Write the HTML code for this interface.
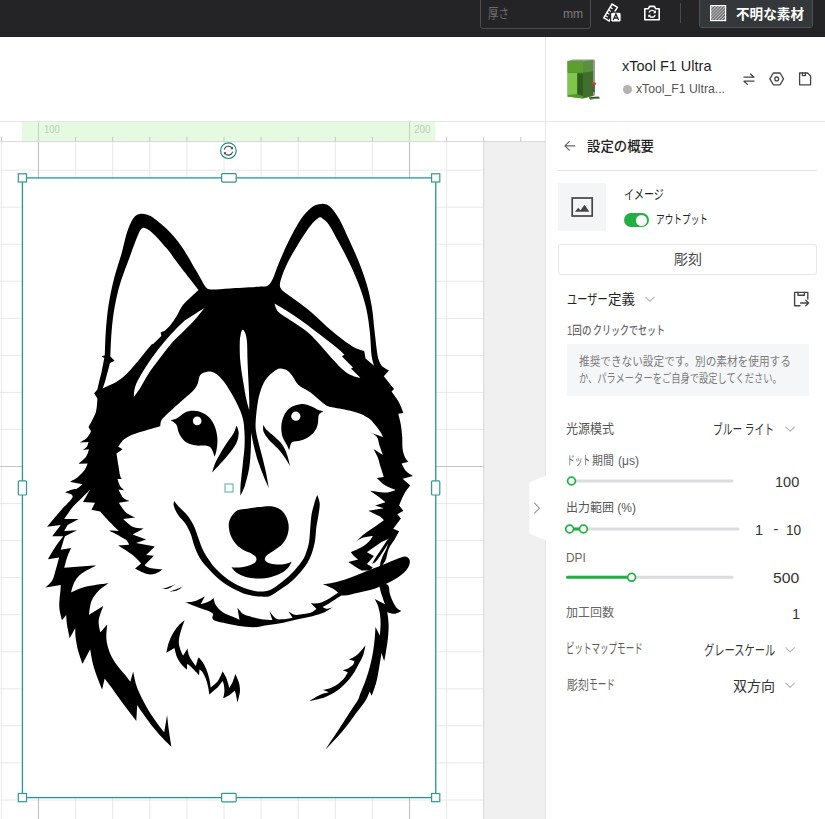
<!DOCTYPE html>
<html lang="ja"><head><meta charset="utf-8"><title>xTool</title>
<style>
html,body{margin:0;padding:0;}
body{width:825px;height:819px;overflow:hidden;position:relative;background:#fff;font-family:"Liberation Sans", "Noto Sans CJK JP", sans-serif;}
.t{position:absolute;white-space:nowrap;line-height:20px;height:20px;transform-origin:0 50%;}
.abs{position:absolute;}
</style></head><body>
<!-- canvas grid -->
<svg class="abs" style="left:0;top:0" width="825" height="819" viewBox="0 0 825 819">
  <rect x="0" y="0" width="825" height="819" fill="#ffffff"/>
  <g stroke="#e8e8e8" stroke-width="1" fill="none">
    <path d="M446.6 141V819M372.4 141V819M335.3 141V819M298.2 141V819M261.1 141V819M224.0 141V819M186.9 141V819M149.8 141V819M112.7 141V819M75.6 141V819M1.4 141V819"/>
    <path d="M0 170.1H483.5M0 207.2H483.5M0 244.2H483.5M0 281.2H483.5M0 318.3H483.5M0 355.4H483.5M0 392.4H483.5M0 429.4H483.5M0 503.6H483.5M0 540.6H483.5M0 577.6H483.5M0 614.7H483.5M0 651.8H483.5M0 688.8H483.5M0 725.8H483.5M0 762.9H483.5M0 800.0H483.5"/>
  </g>
  <g stroke="#c2c2c2" stroke-width="1.1" fill="none">
    <path d="M38.5 141V819M409.5 141V819M0 466.5H483.5"/>
  </g>
  <rect x="484" y="141.5" width="62" height="678" fill="#f0f0f0"/>
  <path d="M483.7 141V819" stroke="#d4d4d4" stroke-width="1"/>
  <rect x="0" y="122" width="545" height="19.5" fill="#ffffff"/>
  <rect x="22" y="122" width="413.4" height="19.5" fill="#e6f9e1"/>
  <path d="M0 121.5H825" stroke="#e6e6e6"/>
  <path d="M0 141.6H545" stroke="#d6d9d6"/>
  <g stroke="#c6c6c6" stroke-width="1" fill="none">
    <path d="M520.8 137V141.5M483.7 137V141.5M446.6 137V141.5M372.4 137V141.5M335.3 137V141.5M298.2 137V141.5M261.1 137V141.5M224.0 137V141.5M186.9 137V141.5M149.8 137V141.5M112.7 137V141.5M75.6 137V141.5M1.4 137V141.5"/>
    <path d="M38.5 122V141.5M409.5 122V141.5" stroke="#c2d4c0"/>
  </g>
</svg>
<!-- top bar -->
<div class="abs" style="left:0;top:0;width:825px;height:37px;background:#242427;"></div>
<div class="abs" style="left:480px;top:-5px;width:111px;height:34px;border:1px solid #4b4b50;border-radius:3px;box-sizing:border-box;"></div>
<div class="abs" style="left:680px;top:3px;width:1px;height:20px;background:#4a4a4e;"></div>
<div class="abs" style="left:699px;top:-6px;width:114px;height:34px;background:#35383a;border:1px solid #4c4f52;border-radius:3px;box-sizing:border-box;"></div>
<!-- panel -->
<div class="abs" style="left:545px;top:37px;width:280px;height:782px;background:#ffffff;border-left:1px solid #e4e4e4;box-sizing:border-box;"></div>
<div class="abs" style="left:545px;top:121px;width:280px;height:1px;background:#e6e6e6;"></div>
<div class="abs" style="left:558px;top:170px;width:259px;height:1px;background:#e3e3e3;"></div>
<div class="abs" style="left:558px;top:183px;width:48px;height:48px;background:#f4f5f7;"></div>
<div class="abs" style="left:624px;top:213px;width:25px;height:14px;border-radius:7px;background:#1fb141;"></div>
<div class="abs" style="left:636px;top:214.5px;width:11px;height:11px;border-radius:50%;background:#fff;"></div>
<div class="abs" style="left:558px;top:244px;width:259px;height:31px;border:1px solid #e6e6e6;border-radius:3px;box-sizing:border-box;background:#fff;"></div>
<div class="abs" style="left:567px;top:344px;width:242px;height:52px;background:#f5f6f8;"></div>
<div class="abs" style="left:622.5px;top:84.5px;width:9px;height:9px;border-radius:50%;background:#b3b3b3;"></div>

<svg class="abs" style="left:0;top:0" width="825" height="819" viewBox="0 0 825 819">
<rect x="23" y="178.5" width="412" height="619" fill="#ffffff"/>
<g fill="#000">
<path d="M162.5 569.5C162.5 569.5 157.5 573.1 154.8 573.8C152.1 574.5 149.5 574.7 146.2 573.8C142.9 572.9 135.1 568.6 135.1 568.6L141.1 563.5C141.1 563.5 136.4 557.9 132.6 555.0C128.8 552.0 118.0 545.6 118.0 545.6L129.1 544.7C129.1 544.7 127.7 541.0 125.7 539.6C122.3 537.2 108.6 530.2 108.6 530.2L118.9 531.0C118.9 531.0 113.4 525.8 110.3 522.5C107.2 519.2 100.1 511.4 100.1 511.4L91.5 509.7L95.0 502.8L83.0 502.0L89.8 490.0C89.8 490.0 79.1 492.7 75.0 493.0C71.2 493.3 65.4 492.0 65.4 492.0C65.4 492.0 72.8 490.7 75.6 489.4C78.4 488.1 82.5 484.3 82.5 484.3L69.7 481.7C69.7 481.7 75.0 479.2 77.4 477.4C79.8 475.5 82.5 472.9 84.2 470.6C85.9 468.3 87.6 463.4 87.6 463.4L78.2 463.8C78.2 463.8 84.1 459.3 85.9 456.9C87.7 454.5 89.0 449.2 89.0 449.2L82.5 450.1C82.5 450.1 85.8 448.1 86.8 446.7C87.8 445.3 88.5 441.9 88.5 441.9L79.9 442.4C79.9 442.4 85.0 440.0 86.8 438.1C88.6 436.2 91.0 431.3 91.0 431.3L88.5 427.0C88.5 427.0 91.4 422.0 92.7 419.3C94.0 416.6 95.4 414.3 96.2 410.8C97.0 407.3 97.4 398.5 97.4 398.5L94.2 393.3L97.4 389.5C97.4 389.5 98.6 384.1 99.3 381.0C100.0 377.9 101.0 374.8 101.8 371.0C102.6 367.2 104.3 358.0 104.3 358.0L101.6 356.4L104.9 355.2C104.9 355.2 105.2 340.0 105.8 331.6C106.4 323.2 107.2 313.8 108.6 304.8C110.0 295.9 112.0 286.4 114.2 277.9C116.4 269.3 119.5 260.8 121.6 253.5C123.6 246.2 124.9 239.3 126.5 234.0C128.0 228.9 129.7 224.8 131.3 221.7C132.7 219.0 134.4 216.9 136.0 215.6C137.6 214.3 139.3 213.9 141.1 213.7C142.8 213.5 144.7 213.9 146.5 214.4C148.3 214.9 150.1 215.5 152.1 216.9C155.5 219.3 161.9 224.2 166.8 229.1C171.7 234.0 176.5 239.3 181.4 246.2C186.3 253.1 192.0 263.8 196.1 270.6C200.0 277.2 203.4 284.1 205.8 287.2C207.1 288.9 208.6 289.3 210.7 289.4C214.7 289.6 222.3 288.8 230.0 288.4C238.6 287.9 255.7 287.1 262.0 286.6C264.4 286.4 266.1 286.9 267.9 285.6C269.7 284.4 271.3 282.0 272.7 279.1C274.5 275.4 276.2 269.5 278.8 263.3C281.5 257.0 284.9 248.6 288.6 241.3C292.3 234.0 297.1 224.8 300.8 219.3C304.1 214.4 308.1 210.7 310.6 208.3C312.4 206.6 314.2 205.7 316.0 205.0C317.8 204.3 319.9 204.0 321.6 203.9C323.4 203.8 324.8 203.9 326.5 204.6C328.2 205.3 329.9 206.4 331.6 208.3C333.8 210.8 336.8 214.6 339.4 219.3C342.2 224.4 345.4 231.9 348.6 238.8C351.8 245.7 355.3 253.1 358.4 260.8C361.5 268.5 364.8 277.5 367.0 285.2C369.2 292.9 370.6 299.5 371.9 307.2C373.2 314.9 373.6 323.5 374.6 331.6C375.6 339.7 376.6 350.4 377.7 356.0C378.5 360.0 379.6 363.1 381.5 365.5C383.4 367.9 388.9 370.4 388.9 370.4L383.8 376.2L394.0 389.1L391.5 391.6C391.5 391.6 397.1 399.1 399.1 402.7C401.1 406.3 403.4 413.0 403.4 413.0L398.3 413.8C398.3 413.8 400.2 421.1 400.9 425.0C401.5 428.9 401.9 432.9 402.2 436.9C402.5 440.9 402.1 445.5 402.6 448.9C403.1 452.3 404.1 455.3 405.1 457.4C406.0 459.4 408.5 461.7 408.5 461.7L401.7 463.4C401.7 463.4 404.1 469.0 406.0 471.1C407.9 473.2 412.8 475.9 412.8 475.9L402.6 478.8L410.3 485.6C410.3 485.6 406.2 490.4 404.3 493.7C402.4 497.0 399.1 505.6 399.1 505.6L403.4 510.8L397.4 514.2L400.9 518.5L393.2 528.7L399.1 531.3C399.1 531.3 396.6 536.1 394.9 539.0C393.2 541.9 390.5 544.9 388.9 548.4C387.3 551.9 387.0 557.0 385.5 560.3C384.0 563.6 380.0 568.0 380.0 568.0L368.4 570.6L361.8 570.5C361.8 570.5 356.8 567.6 354.5 566.2C352.2 564.8 348.3 562.1 348.3 562.1L358.2 559.6C358.2 559.6 355.7 557.8 354.5 556.6C353.3 555.4 350.9 552.2 350.9 552.2C350.9 552.2 358.8 548.9 361.8 547.1C364.9 545.3 367.4 543.1 369.2 541.2C371.0 539.4 372.8 536.0 372.8 536.0C372.8 536.0 366.1 536.7 363.3 537.6C360.5 538.5 356.0 541.6 356.0 541.6C356.0 541.6 360.9 536.7 363.3 534.7C365.7 532.7 368.2 531.2 370.6 529.5C373.1 527.8 375.8 525.9 378.0 524.4C380.2 522.9 383.8 520.2 383.8 520.2C383.8 520.2 382.0 517.8 380.3 516.8C377.7 515.2 368.4 510.8 368.4 510.8L383.8 508.2L375.2 505.6L385.5 502.2C385.5 502.2 381.2 498.7 378.6 496.8C376.0 494.9 370.1 490.8 370.1 490.8C370.1 490.8 381.2 492.6 385.5 492.5C389.7 492.4 395.7 489.9 395.7 489.9C395.7 489.9 388.6 487.6 385.5 485.6C382.4 483.6 376.9 477.9 376.9 477.9L383.8 477.1C383.8 477.1 381.3 469.3 380.3 466.0C379.3 462.7 378.9 460.2 377.8 457.4C376.7 454.5 373.5 448.9 373.5 448.9L382.9 454.9C382.9 454.9 380.5 448.5 379.5 445.5C378.5 442.5 378.5 439.0 376.9 436.9C375.3 434.8 370.1 432.6 370.1 432.6L382.9 436.9C382.9 436.9 381.5 433.7 380.3 431.8C379.0 429.8 377.2 427.3 375.2 425.0C373.2 422.7 371.2 420.1 368.4 418.1C365.5 416.1 362.1 414.4 358.1 413.0C354.1 411.6 348.9 410.6 344.4 409.6C339.8 408.6 333.9 407.7 330.8 407.0C328.8 406.5 327.7 406.4 326.0 405.3C324.2 404.2 322.4 402.5 320.0 400.5C317.4 398.4 314.1 395.1 310.5 392.5C306.9 389.9 301.4 387.7 298.5 385.0C295.6 382.3 294.6 378.9 292.8 376.5C291.0 374.1 289.6 372.1 287.5 370.8C285.4 369.5 282.4 368.4 280.0 368.6C277.6 368.8 275.5 370.2 273.0 372.2C270.5 374.1 267.3 377.0 265.2 380.3C263.1 383.6 261.4 388.2 260.1 392.2C258.8 396.2 258.2 399.6 257.5 404.2C256.8 408.8 256.1 415.3 255.8 419.6C255.5 423.7 255.4 426.1 255.8 429.8C256.2 433.5 257.3 437.5 258.3 441.8C259.3 446.1 260.6 450.4 261.9 455.5C263.2 460.6 264.9 467.2 266.0 472.6C267.1 478.0 268.8 487.9 268.8 487.9C268.8 487.9 265.2 480.3 263.5 476.0C261.8 471.7 260.0 467.2 258.4 462.3C256.8 457.4 255.3 451.9 254.1 446.9C252.9 441.9 251.2 432.4 251.2 432.4C251.2 432.4 251.1 445.9 250.7 452.0C250.3 458.1 250.0 463.4 249.0 469.1C248.0 474.8 246.1 481.8 244.7 486.2C243.4 490.1 240.4 495.6 240.4 495.6C240.4 495.6 240.2 490.0 240.5 486.2C240.9 481.2 241.9 472.0 242.6 465.7C243.2 459.4 244.1 453.7 244.4 448.6C244.7 443.5 244.8 439.6 244.6 435.0C244.4 430.4 244.2 425.6 243.4 421.3C242.6 417.0 241.4 413.6 239.6 409.3C237.8 405.0 235.3 400.2 232.7 395.6C230.1 391.1 227.0 385.7 224.2 382.0C221.3 378.3 218.4 375.1 215.6 373.4C212.8 371.7 209.6 371.4 207.1 371.7C204.6 372.0 201.9 373.1 200.3 375.1C198.7 377.1 198.8 381.1 197.7 383.7C196.5 386.3 195.5 388.1 193.4 390.5C191.3 392.9 187.8 395.5 185.0 398.0C182.2 400.5 179.9 402.5 176.5 405.6C173.1 408.7 167.1 414.2 164.5 416.8C163.0 418.3 161.8 419.4 161.1 421.0C160.4 422.6 160.3 426.2 160.3 426.2C160.3 426.2 150.4 429.0 145.7 430.4C141.0 431.8 135.8 433.1 132.1 434.7C128.4 436.3 125.8 437.8 123.5 439.8C121.2 441.8 118.4 446.7 118.4 446.7L122.6 449.2L116.5 453.5C116.5 453.5 117.8 461.8 118.4 465.5C119.0 469.2 119.5 473.4 120.1 475.7C120.5 477.2 121.8 479.1 121.8 479.1L117.5 479.1C117.5 479.1 118.9 484.1 120.1 486.0C121.2 487.9 124.4 490.3 124.4 490.3L118.4 489.4C118.4 489.4 121.6 496.1 123.5 498.0C125.4 499.9 130.0 501.1 130.0 501.1L118.9 502.8C118.9 502.8 123.0 509.8 125.7 512.2C128.4 514.6 135.1 517.4 135.1 517.4L123.2 519.1C123.2 519.1 129.2 525.2 132.6 526.8C136.0 528.4 143.7 528.5 143.7 528.5L132.6 534.4L146.2 539.6L136.0 543.0L154.8 546.4L146.2 555.0L153.9 555.8L144.5 565.2C144.5 565.2 147.6 567.4 150.0 568.0C153.0 568.7 162.5 569.5 162.5 569.5Z"/>
<path d="M89.8 490.0C89.8 490.0 84.1 495.6 81.3 498.5C78.5 501.4 75.5 503.7 72.7 507.1C69.9 510.5 64.2 519.1 64.2 519.1L78.7 519.1L67.6 525.0L64.2 531.0L77.0 530.2L65.0 536.2C65.0 536.2 63.9 539.2 63.3 541.3C62.6 543.6 60.8 549.8 60.8 549.8L71.0 548.1C71.0 548.1 67.9 555.1 66.8 558.4C65.7 561.7 64.2 567.8 64.2 567.8L96.7 565.2C96.7 565.2 85.0 570.9 81.3 573.8C77.8 576.5 76.1 579.2 74.4 582.3C72.7 585.4 71.0 592.6 71.0 592.6C71.0 592.6 80.1 588.2 86.4 586.6C92.7 585.0 108.6 583.2 108.6 583.2C108.6 583.2 101.2 587.9 98.4 590.9C95.6 593.9 93.1 597.1 91.5 601.1C89.9 605.1 89.0 614.8 89.0 614.8L103.3 605.9C103.3 605.9 99.2 615.9 98.7 620.3C98.2 624.7 100.4 632.2 100.4 632.2L107.3 624.5C107.3 624.5 106.0 634.4 106.4 639.1C106.8 643.8 108.1 648.4 109.8 652.7C111.5 657.0 114.1 661.0 116.7 664.7C119.3 668.4 122.9 672.1 125.2 675.0C127.3 677.7 130.3 681.8 130.3 681.8L133.2 671.5C133.2 671.5 134.8 680.6 136.3 685.2C137.8 689.8 139.9 694.0 142.3 698.9C144.7 703.8 148.1 709.8 150.9 714.3C153.8 718.8 157.2 723.2 159.4 726.2C161.2 728.7 164.2 732.2 164.2 732.2L167.1 715.1C167.1 715.1 168.1 724.4 168.8 729.7C169.5 735.0 171.4 746.8 171.4 746.8C171.4 746.8 164.5 740.2 161.1 736.5C157.7 732.8 154.0 728.5 150.9 724.5C147.8 720.5 144.6 715.9 142.3 712.6C140.2 709.6 137.2 704.9 137.2 704.9L136.3 720.8C136.3 720.8 131.6 714.8 128.6 710.9C125.6 707.0 121.5 701.5 118.4 697.2C115.3 692.9 112.1 688.3 109.8 685.2C107.8 682.5 104.7 678.4 104.7 678.4L102.1 689.5C102.1 689.5 98.6 681.1 97.0 676.7C95.4 672.3 93.8 667.6 92.7 663.0C91.6 658.4 90.2 649.3 90.2 649.3L82.5 663.8C82.5 663.8 79.4 655.4 78.2 651.0C77.0 646.6 76.1 641.2 75.6 637.4C75.1 633.7 75.3 628.0 75.3 628.0L69.7 638.2C69.7 638.2 67.7 629.2 67.1 625.4C66.5 621.5 66.2 615.1 66.2 615.1L62.0 620.3C62.0 620.3 59.5 612.1 59.3 607.1C59.0 602.1 60.2 593.7 60.5 590.0C60.6 588.0 60.8 584.9 60.8 584.9L45.4 587.4C45.4 587.4 50.5 583.5 52.2 580.6C53.9 577.8 54.5 574.1 55.6 570.3C56.8 566.4 59.1 557.5 59.1 557.5L47.9 559.2C47.9 559.2 53.0 550.2 55.6 546.4C58.2 542.6 63.3 536.2 63.3 536.2L52.2 536.2L60.8 525.0L47.1 526.8C47.1 526.8 56.5 515.5 60.8 510.5C65.1 505.5 72.0 499.8 72.7 496.8C73.4 493.8 65.0 492.6 65.0 492.6C65.0 492.6 70.9 489.4 75.0 489.0C79.1 488.6 89.8 490.0 89.8 490.0Z"/>
</g><g fill="#fff">
<path d="M142.8 227.9C140.4 228.5 139.1 232.7 137.4 236.4C135.3 241.1 132.9 248.2 130.1 255.9C127.3 263.6 123.0 274.2 120.4 282.8C117.8 291.4 116.1 299.1 114.6 307.2C113.1 315.3 112.3 323.4 111.6 331.6C110.9 339.8 110.4 356.5 110.4 356.5L114.6 360.8L110.0 363.0C110.0 363.0 106.7 375.8 105.5 380.0C104.5 383.4 102.7 388.4 102.7 388.4C102.7 388.4 107.1 386.4 109.4 385.3C111.7 384.2 114.2 383.2 116.7 381.7C119.2 380.2 121.6 378.3 124.1 376.2C126.5 374.1 129.0 371.4 131.4 368.8C133.8 366.2 136.3 363.2 138.7 360.3C141.1 357.4 143.9 353.8 146.0 351.1C148.1 348.5 151.5 344.4 151.5 344.4L153.4 343.8L161.3 335.9L160.7 332.2L164.4 331.0C164.4 331.0 168.5 327.3 170.5 324.9C172.5 322.5 174.4 319.8 176.4 316.6C178.4 313.4 180.1 308.9 182.5 305.6C184.9 302.4 188.3 299.7 191.0 297.1C193.7 294.5 198.5 290.1 198.5 290.1C198.5 290.1 186.7 275.0 181.4 268.1C176.1 261.2 171.7 254.5 166.8 248.6C161.9 242.7 156.1 236.1 152.1 232.7C148.9 230.0 145.2 227.3 142.8 227.9Z"/>
<path d="M319.1 217.6C317.1 218.8 313.5 221.8 310.6 225.4C307.2 229.8 302.5 237.0 298.4 243.7C294.3 250.4 289.2 259.2 286.2 265.7C283.1 272.2 280.9 278.8 280.1 282.8C279.6 285.5 279.8 287.3 281.5 289.5C283.4 291.9 287.3 294.1 291.2 297.1C296.1 300.8 303.8 305.9 310.7 311.7C317.6 317.4 325.7 325.8 332.6 331.6C339.5 337.4 346.8 343.0 352.1 346.3C356.6 349.1 364.3 351.2 364.3 351.2L365.5 358.5L374.1 365.8C374.1 365.8 372.1 360.0 371.6 356.0C370.9 350.3 370.7 339.3 369.8 331.6C368.9 323.9 368.1 317.0 366.5 309.7C364.9 302.4 362.8 295.4 360.0 287.7C357.2 280.0 353.2 271.0 349.6 263.3C346.0 255.6 341.7 247.8 338.2 241.3C334.7 234.8 331.1 228.0 328.5 224.2C326.6 221.4 324.1 219.5 322.5 218.4C321.4 217.6 320.3 216.9 319.1 217.6Z"/>
<path d="M204.5 308.1C204.5 308.1 194.6 314.2 191.0 316.6C187.6 318.8 185.7 319.7 182.7 322.4C179.3 325.4 174.6 330.2 170.5 334.7C166.4 339.2 162.4 344.0 158.3 349.3C154.2 354.6 149.6 361.1 146.1 366.4C142.6 371.7 139.4 377.2 137.5 381.1C135.9 384.3 135.1 387.0 134.5 389.6C133.9 392.2 133.8 396.9 133.8 396.9C133.8 396.9 137.7 391.9 139.9 388.4C142.3 384.5 145.4 378.4 148.5 373.7C151.6 369.0 154.6 365.2 158.3 360.3C162.0 355.4 166.1 349.5 170.5 344.4C174.9 339.3 180.8 334.1 185.0 329.8C189.2 325.5 192.7 322.1 195.9 318.5C199.2 314.9 204.5 308.1 204.5 308.1Z"/>
<path d="M274.5 303.4C274.5 303.4 281.7 307.5 286.3 310.5C291.1 313.6 297.2 317.5 303.3 321.9C309.4 326.3 317.1 332.4 322.8 336.8C328.5 341.2 333.8 345.2 337.4 348.2C340.3 350.6 344.4 354.6 344.4 354.6L342.0 356.4L353.0 367.4L351.0 368.6L360.3 377.8C360.3 377.8 356.5 377.5 354.2 376.5C351.5 375.4 347.9 373.8 344.4 371.0C340.7 368.1 336.3 363.2 332.2 358.8C328.1 354.4 324.0 349.2 320.0 344.8C316.0 340.4 312.4 336.2 308.0 332.5C303.6 328.8 298.4 325.7 293.5 322.3C288.6 318.9 281.7 315.1 278.5 312.0C275.8 309.3 274.5 303.4 274.5 303.4Z"/>
<path d="M242.4 329.8C241.6 330.1 241.0 333.0 240.6 335.0C240.2 337.0 239.8 339.2 239.8 342.0C239.7 346.2 239.7 353.7 240.2 360.0C240.7 366.3 241.8 373.3 242.9 380.0C244.0 386.7 245.4 395.0 246.5 400.0C247.4 404.1 249.2 410.0 249.2 410.0C249.2 410.0 249.4 404.0 249.3 400.0C249.2 395.0 248.7 386.7 248.4 380.0C248.1 373.3 247.7 366.3 247.5 360.0C247.3 353.7 247.4 346.5 247.0 342.0C246.7 338.3 246.0 335.0 245.2 333.0C244.6 331.4 243.2 329.5 242.4 329.8Z"/>
<path d="M389.0 538.7C389.0 538.7 384.1 540.6 381.6 542.0C379.2 543.4 376.7 545.4 374.3 547.1C371.9 548.8 367.0 552.2 367.0 552.2L373.9 555.9L367.0 564.0L372.8 567.6L368.4 571.8L380.0 568.0C380.0 568.0 380.1 565.2 380.2 564.0C380.3 562.8 380.5 562.2 380.9 561.0C381.4 559.5 382.1 557.4 383.1 555.2C384.1 553.0 385.8 550.5 386.8 547.8C387.8 545.0 389.0 538.7 389.0 538.7Z"/>
</g><g fill="#000">
<path d="M389.0 538.7C389.0 538.7 387.3 540.0 386.4 541.2C385.1 543.0 383.0 546.5 381.2 549.3C379.4 552.1 376.9 555.7 375.4 558.1C374.0 560.3 372.3 563.8 372.3 563.8C372.3 563.8 374.2 563.2 375.2 562.3C376.3 561.2 377.7 559.4 379.2 557.3C380.8 555.1 383.0 551.8 384.6 549.3C386.2 546.8 388.1 544.0 388.8 542.2C389.3 540.9 389.0 538.7 389.0 538.7Z"/>
<path d="M170.5 420.2C170.5 420.2 174.3 419.7 176.5 418.5C178.9 417.2 182.8 413.8 185.0 412.5C186.8 411.5 187.9 411.0 190.0 410.9C192.6 410.8 197.2 410.9 200.3 411.9C203.4 412.9 206.4 414.6 208.8 417.0C211.2 419.4 213.4 422.8 214.8 426.4C216.2 430.0 217.1 434.4 217.4 438.4C217.7 442.4 217.0 447.2 216.5 450.3C216.1 453.0 214.6 456.8 214.6 456.8C214.6 456.8 212.6 449.9 211.0 448.0C209.4 446.1 207.3 446.0 205.0 445.6C202.7 445.2 199.5 445.9 197.0 445.6C194.5 445.3 192.1 444.8 190.0 444.0C187.9 443.2 186.3 442.7 184.5 441.0C182.7 439.3 180.6 436.6 179.2 433.8C177.8 431.1 177.8 426.8 176.3 424.5C174.9 422.2 170.5 420.2 170.5 420.2Z"/>
<path d="M281.3 426.4C281.5 422.8 282.5 418.6 284.0 415.5C285.5 412.4 287.4 409.7 290.3 407.8C293.2 405.9 298.2 404.4 301.6 404.1C305.1 403.9 308.4 405.4 311.0 406.3C313.6 407.2 315.0 408.5 317.1 409.4C319.2 410.2 323.6 411.4 323.6 411.4C323.6 411.4 319.9 412.6 318.9 414.7C317.9 416.8 318.5 421.2 317.8 424.0C317.1 426.8 316.2 429.2 314.5 431.5C312.8 433.8 310.1 436.1 307.8 437.6C305.5 439.1 303.1 439.9 300.5 440.6C297.9 441.3 294.1 441.5 292.5 442.0C291.6 442.3 291.3 442.9 290.9 443.8C290.3 445.2 289.2 450.3 289.2 450.3C289.2 450.3 288.0 447.2 287.0 445.2C285.9 443.0 283.6 440.1 282.6 437.0C281.7 433.9 281.1 430.0 281.3 426.4Z"/>
<path d="M236.5 425.6C236.5 425.6 238.8 430.2 238.7 433.2C238.6 436.2 238.0 439.8 236.2 443.5C234.3 447.2 231.4 450.9 227.6 455.5C223.6 460.4 212.2 472.6 212.2 472.6C212.2 472.6 213.8 466.2 215.6 462.3C217.6 458.0 221.2 451.8 224.2 446.9C227.2 442.0 231.5 436.8 233.6 433.2C235.2 430.4 236.5 425.6 236.5 425.6Z"/>
<path d="M263.3 424.8C263.3 424.8 262.7 429.4 263.6 431.8C264.5 434.2 266.3 436.6 268.6 439.4C271.0 442.2 275.1 445.6 277.8 448.6C280.5 451.6 282.8 454.6 284.8 457.6C286.9 460.6 290.1 466.4 290.1 466.4C290.1 466.4 288.3 458.1 287.0 454.5C285.7 450.9 284.2 447.6 282.1 444.6C280.0 441.6 277.0 439.1 274.4 436.6C271.8 434.1 268.4 431.8 266.5 429.8C264.9 428.1 263.3 424.8 263.3 424.8Z"/>
<path d="M235.6 511.4C233.0 513.5 230.0 518.1 229.1 521.7C228.2 525.3 229.0 529.5 229.9 532.9C230.8 536.3 232.6 539.6 234.7 542.4C236.8 545.2 239.8 547.6 242.6 549.5C245.4 551.4 249.1 552.2 251.3 553.5C253.5 554.8 255.4 556.0 256.1 557.5C256.8 559.0 256.5 560.9 255.3 562.2C254.1 563.5 251.7 564.5 249.0 565.4C246.3 566.3 242.3 567.2 239.4 567.5C236.5 567.8 231.5 567.3 231.5 567.3C231.5 567.3 234.0 570.9 236.3 572.5C238.7 574.1 242.1 576.0 245.8 577.0C249.5 578.0 254.3 578.6 258.5 578.6C262.7 578.6 267.2 578.0 271.2 577.0C275.2 576.0 279.4 574.2 282.3 572.5C285.2 570.8 287.2 568.8 288.7 567.0C290.2 565.2 291.5 561.7 291.5 561.7C291.5 561.7 286.8 563.9 283.9 564.3C281.0 564.7 277.2 564.6 274.4 564.3C271.6 563.9 268.8 563.1 267.2 562.2C265.8 561.4 264.8 560.2 264.8 559.0C264.8 557.8 265.8 556.3 267.2 555.1C268.8 553.6 271.9 552.1 274.4 550.3C276.9 548.4 280.2 546.4 282.3 544.0C284.4 541.6 286.0 538.9 287.1 536.0C288.2 533.1 288.8 529.7 288.7 526.5C288.6 523.3 287.6 519.8 286.3 517.0C285.0 514.2 283.2 511.6 280.7 509.8C278.2 508.0 274.9 506.8 271.2 506.3C267.5 505.9 262.9 506.7 258.5 507.1C254.1 507.6 248.4 508.3 244.6 509.0C240.9 509.7 238.2 509.3 235.6 511.4Z"/>
<path d="M174.1 501.0C174.1 501.0 173.2 504.1 173.8 506.1C174.5 508.4 176.2 512.0 178.2 514.9C180.1 517.8 183.4 520.5 185.5 523.7C187.6 526.9 189.2 530.3 190.7 534.0C192.2 537.7 192.8 541.8 194.3 545.7C195.8 549.6 197.3 553.7 199.5 557.4C201.7 561.1 204.2 564.0 207.5 567.7C210.8 571.4 215.2 576.0 219.3 579.4C223.5 582.8 227.8 585.7 232.4 588.2C237.0 590.7 242.2 593.2 247.1 594.6C252.0 596.0 257.9 596.4 261.7 596.6C265.0 596.8 266.9 597.2 270.0 596.0C273.2 594.8 277.3 591.5 280.7 589.3C284.1 587.1 287.0 585.3 290.1 582.6C293.2 579.9 296.6 576.6 299.5 573.2C302.4 569.9 305.5 566.1 307.6 562.5C309.7 558.9 311.1 555.3 312.3 551.7C313.5 548.1 314.3 545.0 315.0 541.0C315.7 537.0 315.7 532.1 316.3 527.6C316.9 523.1 318.0 518.2 318.6 514.2C319.2 510.2 319.9 506.6 319.7 503.4C319.5 500.2 317.2 495.1 317.2 495.1C317.2 495.1 315.2 500.2 314.3 503.4C313.4 506.6 312.3 510.2 311.6 514.2C310.9 518.2 310.7 523.1 310.3 527.6C309.9 532.1 309.8 537.2 309.2 541.0C308.6 544.8 307.9 547.3 306.9 550.4C305.8 553.5 304.8 556.7 302.9 559.8C301.0 562.9 298.3 566.1 295.5 569.2C292.7 572.3 289.2 575.8 286.1 578.6C283.0 581.4 279.4 584.1 276.7 586.0C274.2 587.8 272.2 589.1 270.0 590.0C267.8 590.9 265.7 591.2 263.3 591.4C260.9 591.6 258.8 591.8 255.9 591.2C252.2 590.4 245.8 588.8 241.2 586.8C236.5 584.8 232.2 582.3 228.0 579.4C223.8 576.5 219.6 572.6 216.3 569.2C213.0 565.8 210.6 562.3 208.3 558.9C206.0 555.5 204.1 552.4 202.4 548.7C200.7 545.0 199.5 540.8 198.0 536.9C196.5 533.0 195.4 528.9 193.6 525.2C191.8 521.5 189.3 517.8 187.0 514.9C184.7 512.0 181.8 509.9 179.7 507.6C177.5 505.3 174.1 501.0 174.1 501.0Z"/>
<path d="M185.2 602.3C185.2 602.3 192.1 601.9 195.4 600.9C198.7 599.9 204.9 596.2 204.9 596.2L200.5 604.5C200.5 604.5 206.4 602.7 208.6 601.6C210.8 600.5 213.7 597.9 213.7 597.9C213.7 597.9 214.3 602.8 215.9 605.3C217.5 607.8 220.5 610.7 223.2 612.6C225.9 614.5 229.6 615.4 232.3 616.6C235.0 617.8 239.5 619.9 239.5 619.9L237.4 607.5C237.4 607.5 240.4 611.9 242.5 613.4C244.6 614.9 246.7 615.4 249.7 616.3C252.8 617.3 257.6 618.6 261.4 619.2C265.2 619.8 272.3 619.9 272.3 619.9L269.4 610.9C269.4 610.9 273.6 617.1 275.9 618.5C278.2 619.9 280.4 619.3 283.2 619.2C286.0 619.1 292.6 617.7 292.6 617.7L288.3 611.2C288.3 611.2 292.3 614.3 294.8 614.8C297.3 615.3 300.6 614.6 303.5 614.1C306.4 613.6 310.1 612.8 312.3 611.9C314.2 611.1 316.5 608.8 316.5 608.8L310.8 603.2C310.8 603.2 316.4 603.8 319.5 603.0C322.6 602.2 326.3 600.1 329.7 598.2C333.1 596.3 337.2 593.2 339.9 591.5C342.3 590.0 346.0 588.0 346.0 588.0L346.0 592.5C346.0 592.5 338.7 597.2 335.5 599.2C332.3 601.2 329.0 603.5 326.8 604.8C325.1 605.8 322.5 607.0 322.5 607.0C322.5 607.0 325.3 608.8 327.0 608.8C328.7 608.8 332.8 607.3 332.8 607.3C332.8 607.3 327.3 611.1 323.9 612.6C320.5 614.1 316.7 615.2 312.3 616.3C307.9 617.4 302.6 618.1 297.7 619.2C292.8 620.3 288.0 621.8 283.2 622.8C278.4 623.8 273.5 624.3 268.6 625.0C263.8 625.7 259.2 627.1 254.1 627.2C249.0 627.3 243.1 626.5 237.9 625.8C232.8 625.1 227.1 623.7 223.2 622.8C219.7 622.0 216.3 621.5 214.5 620.6C213.2 620.0 212.6 618.8 212.3 617.7C212.1 616.6 213.6 615.1 213.0 614.0C212.4 612.9 210.5 612.0 208.6 611.1C206.2 610.0 202.2 609.0 198.3 607.5C194.4 606.0 185.2 602.3 185.2 602.3Z"/>
<path d="M323.1 584.3C323.1 584.3 330.1 583.5 334.2 582.6C338.3 581.7 343.3 580.2 347.9 578.6C352.4 577.0 356.9 575.1 361.5 573.3C366.1 571.5 371.1 569.4 375.2 567.8C379.3 566.1 382.5 564.8 386.0 563.4C389.5 562.0 393.1 560.4 396.3 559.2C399.5 558.0 402.8 556.4 405.0 556.4C407.2 556.4 408.7 558.1 409.4 559.5C410.1 560.9 410.0 562.8 409.4 564.6C408.8 566.5 407.7 568.6 406.0 570.6C404.3 572.6 402.0 574.6 399.1 576.6C396.2 578.6 392.9 580.6 388.9 582.6C384.9 584.6 380.3 586.8 375.2 588.5C370.1 590.2 363.5 591.6 358.1 592.8C352.7 593.9 346.7 596.0 342.7 595.4C338.7 594.8 337.5 591.2 334.2 589.4C330.9 587.5 323.1 584.3 323.1 584.3Z"/>
<path d="M379.9 585.0C380.9 583.2 386.2 583.5 387.9 585.1C389.6 586.7 389.1 591.7 390.1 594.7C391.1 597.8 392.6 601.1 393.8 603.4C395.0 605.6 396.1 607.3 397.4 608.6C398.7 609.9 401.4 611.1 401.4 611.1C401.4 611.1 397.2 613.4 395.2 613.7C393.2 614.0 390.7 613.4 389.4 613.0C388.4 612.7 387.2 611.5 387.2 611.5C387.2 611.5 388.5 619.5 388.6 624.0C388.7 628.5 388.4 633.7 387.9 638.6C387.4 643.5 386.3 649.5 385.7 653.3C385.2 656.5 384.2 661.3 384.2 661.3L381.5 653.0C381.5 653.0 380.0 663.0 379.1 667.9C378.2 672.8 377.4 678.0 376.2 682.6C375.0 687.2 371.8 695.8 371.8 695.8L369.6 691.4C369.6 691.4 367.8 696.8 365.9 700.0C363.8 703.5 360.6 707.3 357.0 712.1C353.1 717.4 347.6 725.3 342.3 731.6C337.0 737.9 325.2 750.0 325.2 750.0C325.2 750.0 333.3 737.9 337.4 731.6C341.5 725.3 346.6 717.3 350.0 712.0C353.1 707.2 356.2 703.0 357.9 700.0C359.1 697.9 359.2 696.6 360.1 694.3C361.4 690.9 364.2 684.5 365.9 679.6C367.6 674.7 369.1 669.9 370.3 665.0C371.5 660.1 372.6 654.7 373.3 650.3C374.0 645.9 374.3 642.5 374.7 638.6C375.1 634.7 375.5 626.9 375.5 626.9L379.9 635.7C379.9 635.7 380.6 627.7 380.6 624.0C380.6 620.3 380.4 616.9 379.9 613.7C379.4 610.5 378.6 607.4 377.7 604.9C376.8 602.4 374.7 599.0 374.7 599.0L385.0 604.2C385.0 604.2 383.0 599.3 382.1 596.1C381.2 592.9 378.9 586.8 379.9 585.0Z"/>
<path d="M309.6 701.0C309.6 701.0 320.4 698.9 324.9 697.2C329.4 695.5 333.2 693.3 336.6 691.0C340.1 688.7 342.9 686.0 345.6 683.2C348.3 680.4 350.8 677.4 353.0 674.2C355.2 671.0 357.2 667.0 358.9 663.8C360.6 660.6 362.1 658.0 363.2 654.9C364.3 651.8 365.5 645.2 365.5 645.2C365.5 645.2 362.4 649.2 360.8 651.0C359.2 652.8 357.6 654.6 355.6 656.0C353.7 657.4 349.1 659.4 349.1 659.4L354.3 661.0C354.3 661.0 354.1 663.4 353.2 664.6C352.3 665.8 350.5 667.0 348.8 668.0C347.1 669.0 342.8 670.3 342.8 670.3L347.8 672.2C347.8 672.2 345.8 676.4 344.0 678.4C342.2 680.4 339.6 682.7 337.2 684.4C334.8 686.1 331.7 687.5 329.3 688.4C326.9 689.3 322.7 689.7 322.7 689.7L328.8 692.3C328.8 692.3 323.5 693.3 320.3 694.8C317.1 696.2 309.6 701.0 309.6 701.0Z"/>
<path d="M184.7 620.2C184.7 620.2 182.4 625.9 181.5 628.9C180.6 631.9 179.5 635.5 179.1 638.2C178.7 640.9 178.8 643.0 179.1 645.1C179.4 647.2 180.2 649.1 180.9 650.9C181.6 652.6 183.2 655.6 183.2 655.6L187.5 648.6C187.5 648.6 188.2 653.5 189.0 655.6C189.8 657.7 191.3 659.7 192.5 661.4C193.7 663.1 195.9 666.0 195.9 666.0C195.9 666.0 196.7 662.9 197.1 661.4C197.5 659.9 198.5 657.3 198.5 657.3C198.5 657.3 201.6 660.5 202.9 662.5C204.2 664.5 205.3 666.8 206.4 669.5C207.5 672.2 208.6 675.8 209.3 678.8C210.0 681.8 210.7 687.5 210.7 687.5C210.7 687.5 215.2 684.1 216.8 682.3C218.4 680.5 219.3 678.4 220.3 676.5C221.3 674.6 222.6 671.2 222.6 671.2C222.6 671.2 225.1 675.4 226.1 677.6C227.1 679.8 227.9 682.9 228.4 684.6C228.8 685.9 229.2 688.0 229.2 688.0C229.2 688.0 231.5 684.6 232.5 682.3C233.5 680.0 235.4 674.1 235.4 674.1C235.4 674.1 238.0 679.6 238.8 682.3C239.6 685.0 240.0 687.9 240.0 690.4C240.0 692.9 239.2 695.3 238.8 697.3C238.4 699.3 237.5 702.5 237.5 702.5C237.5 702.5 236.4 697.0 236.0 695.0C235.6 693.1 234.8 690.4 234.8 690.4C234.8 690.4 231.5 693.7 229.6 695.0C227.7 696.3 223.2 698.3 223.2 698.3C223.2 698.3 224.3 693.8 224.4 691.5C224.5 689.2 224.1 686.3 223.8 684.6C223.5 683.1 222.6 681.1 222.6 681.1C222.6 681.1 220.1 684.8 218.0 686.9C215.8 689.1 209.3 694.4 209.3 694.4C209.3 694.4 208.7 689.5 208.1 686.9C207.5 684.3 206.8 681.3 205.8 678.8C204.8 676.3 203.4 673.3 202.3 671.8C201.5 670.6 199.4 669.5 199.4 669.5L199.1 675.3C199.1 675.3 196.3 672.2 194.8 670.7C193.3 669.2 191.4 667.2 190.1 666.0C189.0 665.0 187.2 663.7 187.2 663.7L186.9 669.5C186.9 669.5 183.6 666.8 182.0 664.9C180.4 663.0 178.6 660.2 177.4 657.9C176.2 655.6 175.6 652.5 175.1 650.9C174.8 649.8 174.5 648.0 174.5 648.0L166.4 652.7C166.4 652.7 167.6 646.0 168.7 642.8C169.8 639.6 171.2 636.5 172.8 633.6C174.5 630.7 176.6 627.6 178.6 625.4C180.6 623.2 184.7 620.2 184.7 620.2Z"/>
<path d="M169.5 591.5C169.5 591.5 174.3 590.0 176.5 589.2C178.7 588.4 182.8 586.5 182.8 586.5C182.8 586.5 179.2 589.7 177.0 590.5C174.8 591.3 169.5 591.5 169.5 591.5Z"/>
<path d="M161.5 589.0C161.5 589.0 165.7 588.0 168.0 587.2C170.3 586.4 175.3 584.3 175.3 584.3C175.3 584.3 170.8 587.7 168.5 588.5C166.2 589.3 161.5 589.0 161.5 589.0Z"/>
</g><g fill="#fff">
<circle cx="197.2" cy="420.9" r="4.3"/>
<circle cx="295.8" cy="416.2" r="4.6"/>
</g>
</svg>
<svg class="abs" style="left:0;top:0" width="825" height="819" viewBox="0 0 825 819">
<!-- selection box -->
<g fill="none" stroke="#2a958f" stroke-width="1.3">
  <rect x="22.45" y="177.9" width="413.3" height="619.7"/>
</g>
<g fill="#ffffff" stroke="#2f9892" stroke-width="1.2">
  <rect x="18.3" y="173.8" width="8.2" height="8.2"/>
  <rect x="431.6" y="173.8" width="8.2" height="8.2"/>
  <rect x="18.3" y="793.5" width="8.2" height="8.2"/>
  <rect x="431.6" y="793.5" width="8.2" height="8.2"/>
  <rect x="221.6" y="173.7" width="14.6" height="8.4" rx="1"/>
  <rect x="221.6" y="793.4" width="14.6" height="8.4" rx="1"/>
  <rect x="18.3" y="480.8" width="8.2" height="14.2" rx="1"/>
  <rect x="431.6" y="480.8" width="8.2" height="14.2" rx="1"/>
  <rect x="225" y="484" width="8" height="8" stroke="#4fb0aa" stroke-width="1"/>
  <circle cx="228.4" cy="150.7" r="7.8" stroke="#1e8c88" fill="#fff"/>
</g>
<!-- rotate icon -->
<g fill="none" stroke="#444" stroke-width="1.1" stroke-linecap="round">
  <path d="M224.3 149.3A4.3 4.3 0 0 1 232 148.2"/>
  <path d="M232.5 152.1A4.3 4.3 0 0 1 224.8 153.2"/>
</g>
<path d="M232.9 146.6V149.2H230.3Z M223.9 154.8V152.2H226.5Z" fill="#444"/>

</svg>
<svg class="abs" style="left:0;top:0" width="825" height="819" viewBox="0 0 825 819">
<!-- top bar icons -->
<g transform="rotate(31 610.6 12.6)" fill="none" stroke="#fff" stroke-width="1.5">
  <rect x="607.5" y="4.6" width="6.2" height="16"/>
  <path d="M607.5 8.2H610.3M607.5 11.4H610.3M607.5 14.6H610.3M607.5 17.8H610.3" stroke-width="1.2"/>
</g>
<rect x="610.6" y="12.2" width="10.6" height="9.8" rx="1.8" fill="#fff" stroke="#242427" stroke-width="1.2"/>
<path d="M613.2 20L615.9 14L618.6 20M614.2 18H617.6" fill="none" stroke="#242427" stroke-width="1.3"/>
<path d="M644.8 8.8H648.3L649.6 6.4H654.4L655.7 8.8H659.2V19.8H644.8Z" fill="none" stroke="#fff" stroke-width="1.6" stroke-linejoin="round"/>
<g fill="none" stroke="#fff" stroke-width="1.3">
  <path d="M649 12.6A3.3 3.3 0 0 1 655 12.2"/>
  <path d="M655.2 15A3.3 3.3 0 0 1 649.2 15.6"/>
</g>
<path d="M655.9 10.3V13.2H653Z M648.3 17.6V14.7H651.2Z" fill="#fff"/>
<!-- material icon -->
<defs><pattern id="hatch" width="2.2" height="2.2" patternUnits="userSpaceOnUse" patternTransform="rotate(45)"><rect width="2.2" height="2.2" fill="#55585b"/><rect width="1.1" height="2.2" fill="#c9c9c9"/></pattern></defs>
<rect x="710.6" y="5.6" width="15" height="15" fill="url(#hatch)" stroke="#fff" stroke-width="1.2"/>
<!-- device image -->
<g>
  <path d="M567.5 61L583 61.5L593.5 60V96L583 98.5L567.5 96.5Z" fill="#4d8a2c"/>
  <path d="M573 59.5H594.5L593.5 60.5L583 61.5L567.5 61Z" fill="#8d9b88"/>
  <rect x="567.5" y="61" width="15.5" height="11.5" fill="#5c9f31"/>
  <path d="M583 61.5L593.5 60V71.5L583 72.5Z" fill="#5b8f3d"/>
  <rect x="568" y="73" width="9.3" height="22" fill="#7fc74c"/>
  <rect x="577.3" y="73.5" width="5.7" height="22.5" fill="#2f5c1f"/>
  <path d="M583 72.5L593.5 71.5V95.5L583 98Z" fill="#42702c"/>
  <path d="M593.5 60H595V95.5H593.5Z" fill="#9a9a9a"/>
  <path d="M568 95L577 94L583 96V98.5L567.5 96.5Z" fill="#4f9a2a"/>
  <rect x="591.6" y="82.6" width="4.4" height="2.4" rx="1" fill="#d43a2f"/>
  <rect x="593.2" y="85" width="1.4" height="7" fill="#444"/>
  <path d="M589 97.2L598.5 96.6L600 98.2L590 99.4Z" fill="#3a3a3a"/>
  <path d="M589 98.4L599 97.6L600 98.4L590 99.6Z" fill="#5aa83a"/>
</g>
<!-- device row icons -->
<g fill="none" stroke="#444" stroke-width="1.3" stroke-linecap="round" stroke-linejoin="round">
  <path d="M744 77.2H754L750.6 74"/>
  <path d="M754 81.2H744L747.4 84.4"/>
  <path d="M769.9 78.9L773.3 73H780.1L783.5 78.9L780.1 84.8H773.3Z"/>
  <circle cx="776.7" cy="78.9" r="1.9"/>
  <path d="M799.6 73H807.6L810.6 76V84.8H799.6Z"/>
  <path d="M802.4 73V75.6H805.4V73"/>
</g>
<!-- back arrow -->
<g fill="none" stroke="#666" stroke-width="1.2" stroke-linecap="round" stroke-linejoin="round">
  <path d="M574.8 145.9H565M569.2 141.6L564.9 145.9L569.2 150.2"/>
</g>
<!-- image icon -->
<rect x="572.2" y="198" width="20" height="18" fill="none" stroke="#444" stroke-width="1.7"/>
<path d="M575 211.8L578.2 207.8L580.4 210.2L584.6 204.8L589.4 211.8Z" fill="#444"/>
<!-- chevrons -->
<g fill="none" stroke="#b5b5b5" stroke-width="1.1" stroke-linecap="round" stroke-linejoin="round">
  <path d="M645.6 297.2L649.9 301.4L654.2 297.2"/>
  <path d="M785.8 427L790.1 431.2L794.4 427"/>
  <path d="M785.8 647.6L790.1 651.8L794.4 647.6"/>
  <path d="M785.8 683.2L790.1 687.4L794.4 683.2"/>
</g>
<!-- save icon -->
<g fill="none" stroke="#444" stroke-width="1.4" stroke-linecap="round" stroke-linejoin="round">
  <path d="M800 305.8H794.6V292.4H807.8V299"/>
  <path d="M798 292.4V295.2H804.4V292.4"/>
  <path d="M800.6 303H808.6M805.8 300.2L808.6 303L805.8 305.8"/>
</g>
<!-- sliders -->
<g stroke-linecap="round" fill="none">
  <path d="M568 481H732" stroke="#dcdce0" stroke-width="3"/>
  <path d="M568 529H738" stroke="#dcdce0" stroke-width="3"/>
  <path d="M568 577.3H732" stroke="#dcdce0" stroke-width="3"/>
  <path d="M570 529H583" stroke="#1fb141" stroke-width="3"/>
  <path d="M567.5 577.3H631" stroke="#1fb141" stroke-width="3"/>
</g>
<g fill="#fff" stroke="#1fb141" stroke-width="1.7">
  <circle cx="571.5" cy="481" r="3.9"/>
  <circle cx="569.6" cy="529" r="3.9"/>
  <circle cx="583.4" cy="529" r="3.9"/>
  <circle cx="631.6" cy="577.3" r="3.9"/>
</g>
<!-- collapse handle -->
<path d="M546 475.5L529.5 482.5V533.5L546 540.5Z" fill="#ffffff"/>
<path d="M534.6 503.2L539.4 508.2L534.6 513.2" fill="none" stroke="#9a9a9a" stroke-width="1.2" stroke-linecap="round" stroke-linejoin="round"/>
</svg>

<div class="t" id="t_thick" style="left:488px;top:4.0px;font-size:13px;color:#6d6d72;font-weight:400;transform:scaleX(0.8077);">厚さ</div>
<div class="t" id="t_mm" style="left:563px;top:4.0px;font-size:13px;color:#7d7d82;font-weight:400;transform:scaleX(0.9318);">mm</div>
<div class="t" id="t_mat" style="left:736px;top:4.0px;font-size:14px;color:#ffffff;font-weight:700;transform:scaleX(0.9714);">不明な素材</div>
<div class="t" id="t_r100" style="left:43.6px;top:118.80000000000001px;font-size:11px;color:#bccfbc;font-weight:400;transform:scaleX(0.8611);">100</div>
<div class="t" id="t_r200" style="left:414px;top:118.80000000000001px;font-size:11px;color:#bccfbc;font-weight:400;transform:scaleX(0.8889);">200</div>
<div class="t" id="t_dev" style="left:622px;top:55.5px;font-size:14.5px;color:#1f1f1f;font-weight:400;">xTool F1 Ultra</div>
<div class="t" id="t_dev2" style="left:636px;top:79.0px;font-size:12.5px;color:#555555;font-weight:400;transform:scaleX(0.9780);">xTool_F1 Ultra...</div>
<div class="t" id="t_title" style="left:587px;top:136.0px;font-size:14px;color:#222222;font-weight:500;transform:scaleX(0.9571);">設定の概要</div>
<div class="t" id="t_img" style="left:624px;top:185.0px;font-size:13.5px;color:#222222;font-weight:400;transform:scaleX(0.7407);">イメージ</div>
<div class="t" id="t_out" style="left:656px;top:210.0px;font-size:12.5px;color:#222222;font-weight:400;transform:scaleX(0.6933);">アウトプット</div>
<div class="t" id="t_eng" style="left:674px;top:249.0px;font-size:14px;color:#444444;font-weight:400;">彫刻</div>
<div class="t" id="t_user1" style="left:566.5px;top:289.0px;font-size:14px;color:#222222;font-weight:400;transform:scaleX(0.7286);">ユーザー</div>
<div class="t" id="t_user2" style="left:608px;top:289.0px;font-size:14px;color:#222222;font-weight:400;transform:scaleX(0.9643);">定義</div>
<div class="t" id="t_click1" style="left:566.5px;top:320.5px;font-size:12px;color:#666666;font-weight:500;transform:scaleX(0.7968);">1回の</div>
<div class="t" id="t_click2" style="left:592.7px;top:320.5px;font-size:12px;color:#666666;font-weight:500;transform:scaleX(0.7500);">クリックでセット</div>
<div class="t" id="t_note1" style="left:579px;top:351.5px;font-size:12px;color:#7a7a7a;font-weight:400;transform:scaleX(0.8870);">推奨できない設定です。別の素材を使用する</div>
<div class="t" id="t_note2" style="left:579px;top:368.5px;font-size:12px;color:#7a7a7a;font-weight:400;transform:scaleX(0.7719);">か、パラメーターをご自身で設定してください。</div>
<div class="t" id="t_light" style="left:566px;top:418.5px;font-size:13px;color:#555555;font-weight:400;transform:scaleX(0.9231);">光源模式</div>
<div class="t" id="t_blue" style="left:713px;top:419.0px;font-size:14px;color:#333333;font-weight:400;transform:scaleX(0.6932);">ブルー ライト</div>
<div class="t" id="t_dot1" style="left:566.7px;top:450.5px;font-size:12.5px;color:#5e5e5e;font-weight:400;transform:scaleX(0.6211);">ドット</div>
<div class="t" id="t_dot2" style="left:591.5px;top:450.5px;font-size:12.5px;color:#5e5e5e;font-weight:400;transform:scaleX(0.8720);">期間</div>
<div class="t" id="t_dot3" style="left:617.6px;top:450.5px;font-size:12.5px;color:#5e5e5e;font-weight:400;transform:scaleX(0.9636);">(μs)</div>
<div class="t" id="t_v100" style="left:775px;top:472.0px;font-size:14.5px;color:#333333;font-weight:400;">100</div>
<div class="t" id="t_range" style="left:566px;top:497.5px;font-size:12.5px;color:#555555;font-weight:400;transform:scaleX(0.9589);">出力範囲 (%)</div>
<div class="t" id="t_v1" style="left:755px;top:520.0px;font-size:14.5px;color:#333333;font-weight:400;">1</div>
<div class="t" id="t_vd" style="left:773.5px;top:519.0px;font-size:14.5px;color:#333333;font-weight:400;">-</div>
<div class="t" id="t_v10" style="left:786px;top:520.0px;font-size:14.5px;color:#333333;font-weight:400;transform:scaleX(0.9375);">10</div>
<div class="t" id="t_dpi" style="left:566px;top:547.5px;font-size:12.5px;color:#666666;font-weight:400;transform:scaleX(0.9524);">DPI</div>
<div class="t" id="t_v500" style="left:773px;top:568.0px;font-size:14.5px;color:#333333;font-weight:400;transform:scaleX(1.0833);">500</div>
<div class="t" id="t_count" style="left:566px;top:603.0px;font-size:12.5px;color:#666666;font-weight:400;transform:scaleX(0.9600);">加工回数</div>
<div class="t" id="t_c1" style="left:792px;top:604.0px;font-size:14.5px;color:#333333;font-weight:400;">1</div>
<div class="t" id="t_bmp" style="left:566px;top:639.0px;font-size:13.5px;color:#5e5e5e;font-weight:400;transform:scaleX(0.6311);">ビットマップモード</div>
<div class="t" id="t_gray" style="left:704px;top:640.0px;font-size:14px;color:#333333;font-weight:400;transform:scaleX(0.7320);">グレースケール</div>
<div class="t" id="t_mode1" style="left:566.5px;top:675.0px;font-size:13px;color:#5e5e5e;font-weight:400;transform:scaleX(0.8385);">彫刻</div>
<div class="t" id="t_mode2" style="left:589.1px;top:675.0px;font-size:13.5px;color:#5e5e5e;font-weight:400;transform:scaleX(0.6390);">モード</div>
<div class="t" id="t_bi" style="left:733px;top:675.5px;font-size:14px;color:#333333;font-weight:400;">双方向</div>
</body></html>
